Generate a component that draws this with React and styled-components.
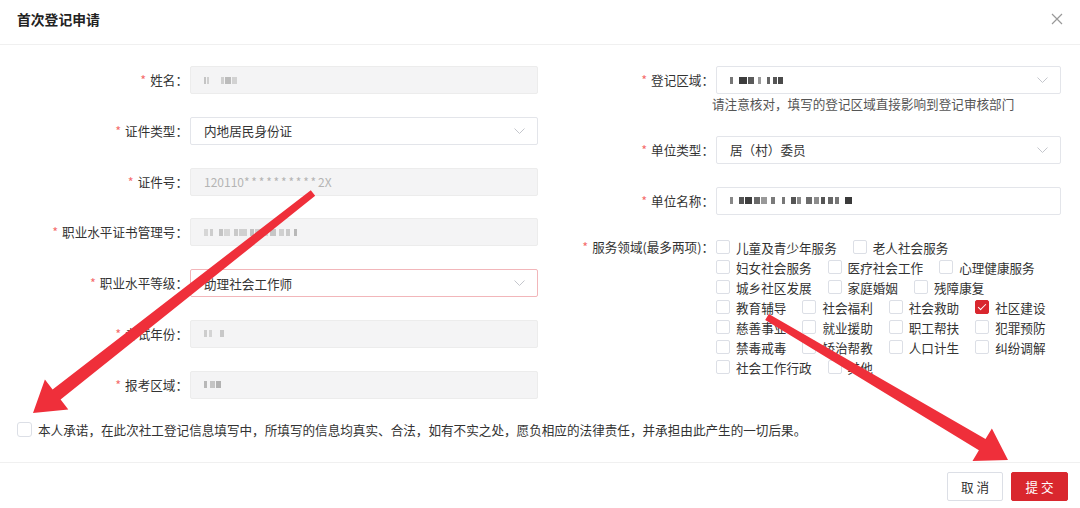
import React from 'react'
import styled, { createGlobalStyle, css } from 'styled-components'

const RED = '#d9272e'

const GlobalStyle = createGlobalStyle`
  * { box-sizing: border-box; }
  html, body { margin: 0; padding: 0; background: #fff; }
  body {
    font-family: "Noto Sans CJK SC", "Noto Sans", sans-serif;
    font-size: 12.6px;
    color: #333;
  }
`

// blurred placeholder blocks for masked personal data: [gap, width, colour]
const MASKS = {
  name: [[0, 2, '#c4c4c4'], [1, 2, '#d0d0d0'], [12, 3, '#cfcfcf'], [1, 6, '#bcbcbc'], [1, 5, '#d2d2d2']],
  certNo: [[0, 4, '#d6d6d6'], [2, 3, '#cdcdcd'], [6, 4, '#c4c4c4'], [1, 6, '#d6d6d6'], [4, 4, '#c9c9c9'], [1, 8, '#d0d0d0'], [3, 4, '#c2c2c2'], [1, 6, '#cfcfcf'], [2, 5, '#d4d4d4'], [2, 6, '#c6c6c6'], [3, 5, '#d0d0d0'], [2, 4, '#cacaca'], [4, 3, '#b8b8b8']],
  year: [[0, 3, '#cdcdcd'], [2, 3, '#d4d4d4'], [8, 4, '#c8c8c8']],
  exam: [[0, 3, '#b8b8b8'], [3, 5, '#c4c4c4'], [1, 5, '#b2b2b2']],
  region: [[0, 3, '#777'], [6, 8, '#3c3c3c'], [1, 6, '#5a5a5a'], [4, 3, '#9a9a9a'], [6, 3, '#666'], [3, 4, '#555'], [1, 5, '#4a4a4a']],
  unit: [[0, 3, '#888'], [6, 5, '#555'], [1, 7, '#3e3e3e'], [2, 6, '#6a6a6a'], [1, 6, '#999'], [4, 4, '#7a7a7a'], [7, 3, '#777'], [6, 5, '#555'], [1, 4, '#8a8a8a'], [5, 6, '#6c6c6c'], [2, 5, '#8d8d8d'], [2, 4, '#555'], [3, 5, '#666'], [2, 4, '#777'], [6, 7, '#3a3a3a']],
}

const AREAS = [
  '儿童及青少年服务', '老人社会服务', '妇女社会服务', '医疗社会工作', '心理健康服务',
  '城乡社区发展', '家庭婚姻', '残障康复', '教育辅导', '社会福利', '社会救助', '社区建设',
  '慈善事业', '就业援助', '职工帮扶', '犯罪预防', '禁毒戒毒', '矫治帮教', '人口计生',
  '纠纷调解', '社会工作行政', '其他',
]

function App() {
  return (
    <>
      <GlobalStyle />
      <Dialog>
        <Header>
          <Title>首次登记申请</Title>
          <CloseBtn aria-label="关闭">
            <svg width="12" height="12" viewBox="0 0 12 12">
              <path d="M1 1 L11 11 M11 1 L1 11" stroke="#999" strokeWidth="1.2" fill="none" />
            </svg>
          </CloseBtn>
        </Header>

        <Body>
          <Columns>
            <Column>
              <Field $label={190} $control={348}>
                <Label required>姓名：</Label>
                <Control disabled><Mask data={MASKS.name} /></Control>
              </Field>
              <Field $label={190} $control={348}>
                <Label required>证件类型：</Label>
                <Select value="内地居民身份证" />
              </Field>
              <Field $label={190} $control={348}>
                <Label required>证件号：</Label>
                <Control disabled>
                  <Muted>120110<Stars>**********</Stars>2X</Muted>
                </Control>
              </Field>
              <Field $label={190} $control={348}>
                <Label required>职业水平证书管理号：</Label>
                <Control disabled><Mask data={MASKS.certNo} /></Control>
              </Field>
              <Field $label={190} $control={348}>
                <Label required>职业水平等级：</Label>
                <Select value="助理社会工作师" invalid />
              </Field>
              <Field $label={190} $control={348}>
                <Label required>考试年份：</Label>
                <Control disabled><Mask data={MASKS.year} /></Control>
              </Field>
              <Field $label={190} $control={348}>
                <Label required>报考区域：</Label>
                <Control disabled><Mask data={MASKS.exam} /></Control>
              </Field>
            </Column>

            <Column>
              <Field $label={176} $control={345}>
                <Label required>登记区域：</Label>
                <Select value={<Mask data={MASKS.region} />} />
                <Hint>请注意核对，填写的登记区域直接影响到登记审核部门</Hint>
              </Field>
              <Field $label={176} $control={345}>
                <Label required>单位类型：</Label>
                <Select value="居（村）委员" />
              </Field>
              <Field $label={176} $control={345}>
                <Label required>单位名称：</Label>
                <Control><Mask data={MASKS.unit} /></Control>
              </Field>
              <Field $label={176} $control={345}>
                <Label required $compact>服务领域(最多两项)：</Label>
                <CheckGroup>
                  {AREAS.map((a) => (
                    <CheckItem key={a}>
                      <Box $checked={a === '社区建设'} />
                      <CheckText>{a}</CheckText>
                    </CheckItem>
                  ))}
                </CheckGroup>
              </Field>
            </Column>
          </Columns>

          <Pledge>
            <Box $large />
            <PledgeText>本人承诺，在此次社工登记信息填写中，所填写的信息均真实、合法，如有不实之处，愿负相应的法律责任，并承担由此产生的一切后果。</PledgeText>
          </Pledge>
        </Body>

        <Footer>
          <Button>取 消</Button>
          <Button $primary>提 交</Button>
        </Footer>

        <Marks viewBox="0 0 1080 508" width="1080" height="508">
          <polygon
            fill="#ef2f3a"
            points="33,413 68.3,409.4 60.6,399.6 315.2,195.8 310.8,190.2 52.6,389.4 44.9,379.6"
          />
          <polygon
            fill="#ef2f3a"
            points="1008,460 972.5,461 978.9,450.3 765.2,320 768.8,314 985.5,439.1 991.9,428.4"
          />
        </Marks>
      </Dialog>
    </>
  )
}

function Label({ required, children, $compact }) {
  return (
    <LabelText $compact={$compact}>
      {required && <Star>*</Star>}
      {children}
    </LabelText>
  )
}

function Select({ value, invalid }) {
  return (
    <Control $invalid={invalid}>
      <Value>{value}</Value>
      <svg width="11" height="6" viewBox="0 0 11 6">
        <path d="M0.5 0.5 L5.5 5.5 L10.5 0.5" stroke="#c4c6cc" strokeWidth="1" fill="none" />
      </svg>
    </Control>
  )
}

function Mask({ data }) {
  return (
    <MaskRow>
      {data.map(([gap, w, c], i) => (
        <MaskBit key={i} style={{ marginLeft: gap, width: w, background: c }} />
      ))}
    </MaskRow>
  )
}

const Dialog = styled.div`
  position: relative;
  width: 1080px;
  height: 508px;
  overflow: hidden;
  background: #fff;
`

const Header = styled.div`
  height: 45px;
  padding: 0 17px 6px 17px;
  display: flex;
  align-items: center;
  justify-content: space-between;
  border-bottom: 1px solid #f0f0f0;
`

const Title = styled.h1`
  margin: 0;
  font-size: 13.8px;
  font-weight: 700;
  color: #222;
`

const CloseBtn = styled.button`
  border: 0;
  padding: 0;
  background: none;
  display: flex;
  cursor: pointer;
`

const Body = styled.div`
  padding: 21px 0 24px 0;
`

const Columns = styled.div`
  display: grid;
  grid-template-columns: 540px 1fr;
  align-items: start;
`

const Column = styled.div`
  display: flex;
  flex-direction: column;
`

const Field = styled.div`
  display: grid;
  grid-template-columns: ${(p) => p.$label}px ${(p) => p.$control}px;
  align-items: start;
  margin-bottom: 22.8px;
`

const LabelText = styled.label`
  height: 28px;
  line-height: 28px;
  padding-right: 2px;
  text-align: right;
  color: #333;
  white-space: nowrap;
  ${(p) => p.$compact && css`
    height: 20px;
    line-height: 20px;
  `}
`

const Star = styled.span`
  color: #f56c6c;
  margin-right: 4px;
`

const Control = styled.div`
  height: 28px;
  padding: 0 12px 0 13px;
  display: flex;
  align-items: center;
  justify-content: space-between;
  border: 1px solid #e3e5ea;
  border-radius: 2px;
  background: #fff;
  color: #333;
  ${(p) => p.disabled && css`
    background: #f4f4f5;
    border-color: #ececec;
  `}
  ${(p) => p.$invalid && css`
    border-color: #f2b6ba;
  `}
`

const Value = styled.span`
  display: flex;
  align-items: center;
`

const Muted = styled.span`
  color: #b4b4b4;
  font-size: 12px;
`

const Stars = styled.span`
  letter-spacing: 1.8px;
`

const MaskRow = styled.span`
  display: inline-flex;
  align-items: center;
  filter: blur(0.7px);
`

const MaskBit = styled.span`
  display: inline-block;
  height: 7px;
`

const Hint = styled.div`
  grid-column: 2;
  margin-left: -4px;
  line-height: 19px;
  color: #555;
`

const CheckGroup = styled.div`
  width: 350px;
  display: flex;
  flex-wrap: wrap;
`

const CheckItem = styled.label`
  display: inline-flex;
  align-items: center;
  height: 20px;
  margin-right: 16px;
  color: #333;
  white-space: nowrap;
`

const CheckText = styled.span`
  margin-left: 6px;
`

const Box = styled.span`
  position: relative;
  display: inline-block;
  width: ${(p) => (p.$large ? 15 : 14)}px;
  height: ${(p) => (p.$large ? 15 : 14)}px;
  flex: none;
  border: 1px solid #dcdfe6;
  border-radius: ${(p) => (p.$large ? 3 : 2)}px;
  background: #fff;
  ${(p) => p.$checked && css`
    background: ${RED};
    border-color: ${RED};
    &::after {
      content: '';
      position: absolute;
      left: 4px;
      top: 1px;
      width: 3px;
      height: 7px;
      border: solid #fff;
      border-width: 0 1.5px 1.5px 0;
      transform: rotate(45deg);
    }
  `}
`

const Pledge = styled.label`
  display: flex;
  align-items: center;
  height: 16px;
  padding-left: 17px;
  color: #333;
`

const PledgeText = styled.span`
  margin-left: 6px;
`

const Footer = styled.div`
  border-top: 1px solid #f0f0f0;
  padding: 9px 12px 0 0;
  display: flex;
  justify-content: flex-end;
  gap: 8px;
`

const Button = styled.button`
  height: 29px;
  min-width: 56px;
  padding: 0 13px;
  font-family: inherit;
  font-size: 12.6px;
  border-radius: 2px;
  border: 1px solid #dcdfe6;
  background: #fff;
  color: #333;
  cursor: pointer;
  ${(p) => p.$primary && css`
    min-width: 57px;
    background: ${RED};
    border-color: ${RED};
    color: #fff;
  `}
`

const Marks = styled.svg`
  position: absolute;
  left: 0;
  top: 0;
  pointer-events: none;
`

export default App
